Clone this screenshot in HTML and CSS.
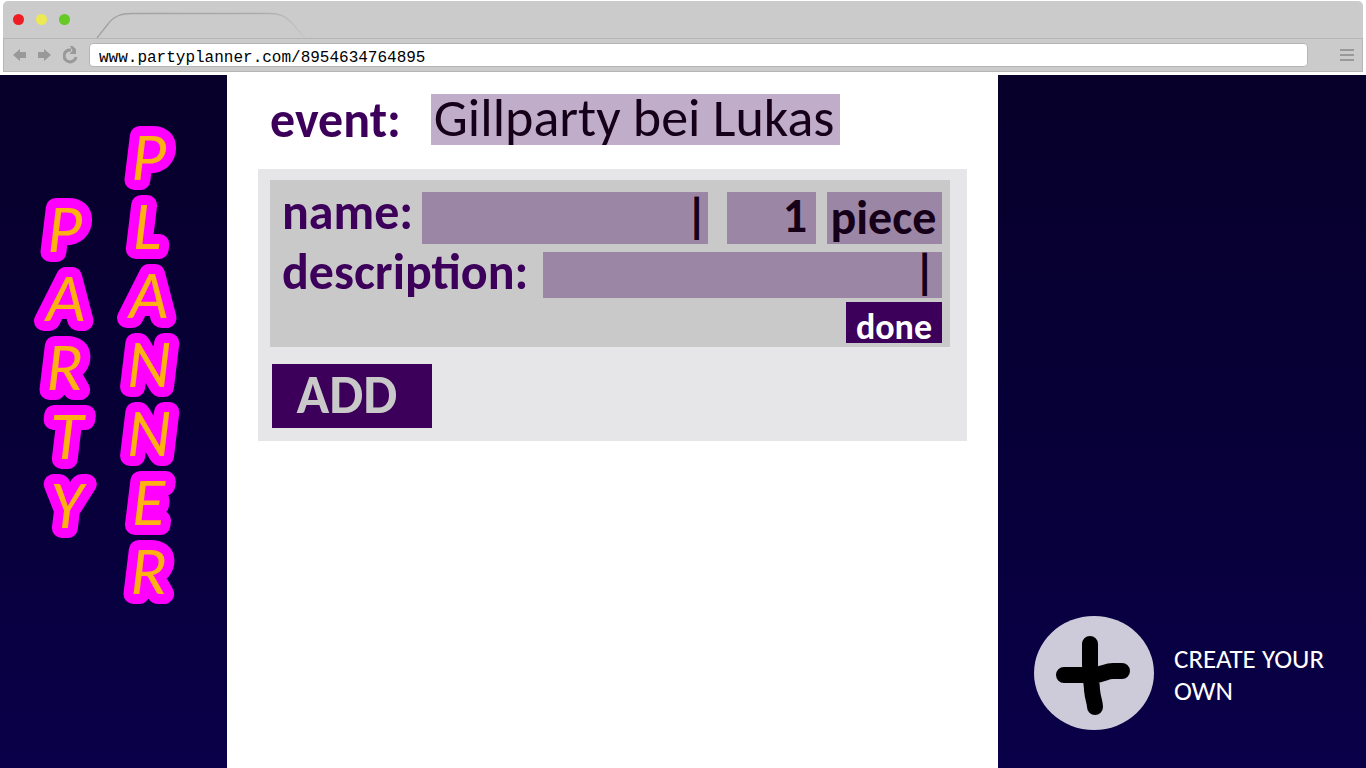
FILE: index.html
```html
<!DOCTYPE html>
<html lang="en">
<head>
<meta charset="utf-8">
<title>Party Planner</title>
<link rel="stylesheet" href="styles.css">
</head>
<body>
<header class="browser">
  <div class="tabs">
    <span class="dot dot-red"></span>
    <span class="dot dot-yellow"></span>
    <span class="dot dot-green"></span>
    <svg class="tab" width="210" height="27" viewBox="0 0 210 27" fill="none" aria-hidden="true">
      <defs>
        <linearGradient id="edge" x1="0" x2="1" y1="0" y2="0">
          <stop offset="0" stop-color="#a0a0a0"/>
          <stop offset=".8" stop-color="#acacac"/>
          <stop offset="1" stop-color="#c6c6c6"/>
        </linearGradient>
      </defs>
      <path d="M1 27 L12 13 C18 5 25 2.500 36 2.500 H174 C185 2.500 191 6 196 12 L209 27" stroke="url(#edge)" stroke-width="1.300"/>
    </svg>
  </div>
  <div class="toolbar">
    <button class="tool" aria-label="Back"><svg width="14" height="12" viewBox="0 0 14 12"><path d="M0 6 L7 0 V3 H13 V9 H7 V12 Z" fill="#999"/></svg></button>
    <button class="tool" aria-label="Forward"><svg width="14" height="12" viewBox="0 0 14 12"><path d="M13 6 L6 0 V3 H0 V9 H6 V12 Z" fill="#999"/></svg></button>
    <button class="tool" aria-label="Reload"><svg width="15" height="18" viewBox="0 0 15 18"><path d="M8 4 A6 6 0 1 0 13 11" fill="none" stroke="#999" stroke-width="3"/><path d="M7 0 H9.500 L13 3 V8 H6.500 L9.500 4.500 Z" fill="#999"/></svg></button>
    <input class="address" type="text" aria-label="Address" value="www.partyplanner.com/8954634764895">
    <button class="tool menu" aria-label="Menu"><svg width="14" height="12" viewBox="0 0 14 12"><path d="M0 1H14M0 6H14M0 11H14" stroke="#999" stroke-width="2"/></svg></button>
  </div>
</header>

<main class="page">
  <aside class="side side-left">
    <svg class="logo" width="180" height="500" viewBox="0 0 180 500" role="img" aria-label="Party Planner">
      <text x="15 14 14 18 18" y="133 202 271 340 409">PARTY</text>
      <text x="99 101 97 95 95 100 98" y="61 130 199 268 337 406 475">PLANNER</text>
    </svg>
  </aside>

  <section class="content">
    <div class="event">
      <label class="label" for="event">event:</label>
      <input class="event-name" id="event" type="text" value="Gillparty bei Lukas">
    </div>

    <div class="panel">
      <form class="item">
        <div class="row">
          <label class="label" for="name">name:</label>
          <input class="field field-name" id="name" type="text" value="|">
          <input class="field field-count" type="text" aria-label="Quantity" value="1">
          <select class="field field-unit" aria-label="Unit"><option>piece</option></select>
        </div>
        <div class="row row-description">
          <label class="label" for="description">description:</label>
          <input class="field field-description" id="description" type="text" value="|">
        </div>
        <button class="done" type="button">done</button>
      </form>
      <button class="add" type="button">ADD</button>
    </div>
  </section>

  <aside class="side side-right">
    <a class="create" href="#create">
      <svg class="plus" width="120" height="114" viewBox="0 0 120 114" aria-hidden="true">
        <ellipse cx="60" cy="57" rx="60" ry="57" fill="#cdcad9"/>
        <path d="M56 28 V48 C56 62 58 68 58 74 C59 84 61 86 61 91 M30 59 H60 C68 59 72 55 79 55 H88" fill="none" stroke="#000" stroke-width="16" stroke-linecap="round" stroke-linejoin="round"/>
      </svg>
      <span class="create-text">CREATE YOUR OWN</span>
    </a>
  </aside>
</main>
</body>
</html>
```
FILE: styles.css
```css
* {
  box-sizing: border-box;
}

body {
  display: flex;
  flex-direction: column;
  min-height: 100vh;
  margin: 0;
  background: #fff;
  font-family: Carlito, Calibri, Lato, sans-serif;
}

button,
input,
select {
  margin: 0;
  padding: 0;
  border: 0;
  border-radius: 0;
  font: inherit;
  color: inherit;
}

.browser {
  padding: 1px 3px 3px;
}

.tabs {
  display: flex;
  align-items: center;
  gap: 12px;
  height: 37px;
  padding-left: 10px;
  border-radius: 5px 5px 0 0;
  background: #cbcbcb;
}

.dot {
  width: 11px;
  height: 11px;
  border-radius: 50%;
}

.dot-red { background: #ef1c24; }
.dot-yellow { background: #ece952; }
.dot-green { background: #65c926; }

.tab {
  align-self: flex-end;
  margin-left: 14px;
}

.toolbar {
  display: flex;
  align-items: center;
  height: 34px;
  padding: 0 8px 0 9px;
  border: 1px solid #b5b5b5;
  background: #cbcbcb;
}

.tool {
  display: flex;
  margin-right: 11px;
  background: none;
}

.address {
  flex: 1;
  min-width: 0;
  height: 24px;
  padding: 5px 9px 0;
  border: 1px solid #b5b5b5;
  border-radius: 4px;
  background: #fff;
  color: #000;
  font: 16px/17px "Liberation Mono", monospace;
}

.menu {
  margin: 0 0 0 32px;
}

.page {
  display: grid;
  grid-template-columns: 227px minmax(0, 1fr) 368px;
  flex: 1;
}

.side {
  background: linear-gradient(#07002a, #07003a 60%, #090049);
}

.logo {
  display: block;
  overflow: visible;
  margin: 44px 0 0 32px;
  fill: #ffb012;
  stroke: #f0f;
  stroke-width: 20px;
  stroke-linejoin: round;
  paint-order: stroke;
  font-size: 68px;
  font-style: italic;
}

.content {
  padding: 19px 31px;
}

.event {
  display: flex;
  align-items: center;
  gap: 30px;
  padding-left: 12px;
}

.label {
  color: #3c005a;
  font-size: 50px;
  font-weight: 700;
  line-height: 40px;
}

.event-name {
  width: 409px;
  height: 51px;
  padding: 0 3px 4px;
  background: #c0adc9;
  color: #160019;
  font-size: 54px;
  line-height: 51px;
}

.panel {
  margin-top: 24px;
  padding: 11px 17px 13px 12px;
  background: #e6e6e8;
}

.item {
  display: flex;
  flex-direction: column;
  padding: 12px 8px 4px 12px;
  background: #c9c9c9;
}

.row {
  display: flex;
  align-items: flex-start;
}

.row-description {
  margin: 8px 0 4px;
}

.field {
  min-width: 0;
  height: 52px;
  padding-bottom: 6px;
  background: #9b87a5;
  color: #160019;
  font-size: 48px;
  font-weight: 700;
  line-height: 48px;
  text-align: right;
}

.field-name {
  flex: 1;
  margin: 0 19px 0 9px;
}

.field-count {
  width: 89px;
  margin-right: 11px;
  padding-right: 9px;
}

.field-unit {
  width: 115px;
  padding: 0 2px 2px 0;
  appearance: none;
  line-height: 52px;
  text-align: center;
}

.field-description {
  flex: 1;
  height: 46px;
  margin-left: 15px;
  padding: 0 6px 8px 0;
}

.done {
  align-self: flex-end;
  width: 96px;
  height: 41px;
  padding-top: 8px;
  background: #3c005a;
  color: #fff;
  font-size: 36px;
  font-weight: 700;
  line-height: 32px;
}

.add {
  display: block;
  width: 160px;
  height: 64px;
  margin: 17px 0 0 2px;
  padding: 0 10px 2px 0;
  background: #3c005a;
  color: #c9c9c9;
  font-size: 54px;
  font-weight: 700;
  line-height: 54px;
}

.side-right {
  display: flex;
  align-items: flex-end;
}

.create {
  display: flex;
  align-items: center;
  gap: 20px;
  padding: 0 36px 38px;
  color: #fff;
  font-size: 27px;
  line-height: 32px;
  text-decoration: none;
}

.create-text {
  padding-top: 4px;
}

.plus {
  flex: none;
}
```
